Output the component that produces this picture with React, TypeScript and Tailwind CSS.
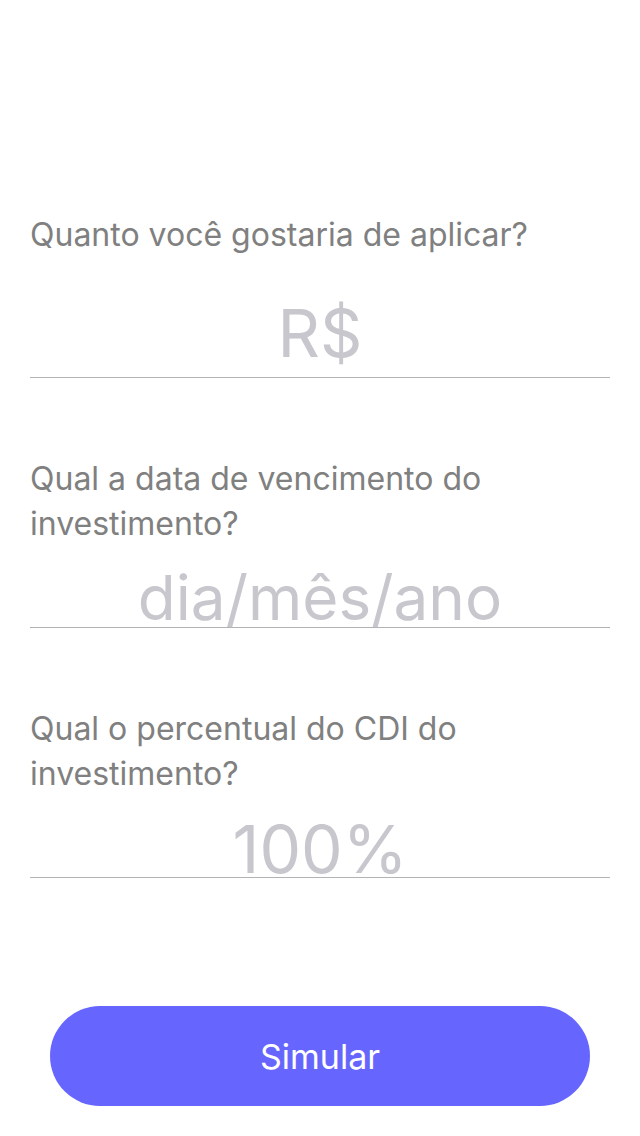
import React from "react";

const font = { fontFamily: "Inter, 'Noto Sans', sans-serif" };

export default function App() {
  return (
    <div className="w-[640px] h-[1136px] bg-white flex flex-col px-[30px] pt-[212px]" style={font}>
      <div className="text-[32px] leading-[45px] text-[#808080]">Quanto você gostaria de aplicar?</div>
      <div className="h-[121px] flex items-end justify-center pb-[16px] border-b border-[#b3b3b3]">
        <span className="text-[66px] leading-[56px] text-[#c7c7cd]">R$</span>
      </div>

      <div className="mt-[78px] text-[32px] leading-[45px] text-[#808080]">
        Qual a data de vencimento do
        <br />
        investimento?
      </div>
      <div className="h-[82px] flex items-end justify-center pb-[1px] border-b border-[#b3b3b3]">
        <span className="text-[62px] leading-[56px] text-[#c7c7cd]">dia/mês/ano</span>
      </div>

      <div className="mt-[78px] text-[32px] leading-[45px] text-[#808080]">
        Qual o percentual do CDI do
        <br />
        investimento?
      </div>
      <div className="h-[82px] flex items-end justify-center border-b border-[#b3b3b3]">
        <span className="text-[66px] leading-[56px] text-[#c7c7cd]">100%</span>
      </div>

      <div className="mt-[128px] px-[20px]">
        <button className="w-full h-[100px] rounded-full bg-[#6666ff] text-white text-[34px] flex items-center justify-center">
          Simular
        </button>
      </div>
    </div>
  );
}
